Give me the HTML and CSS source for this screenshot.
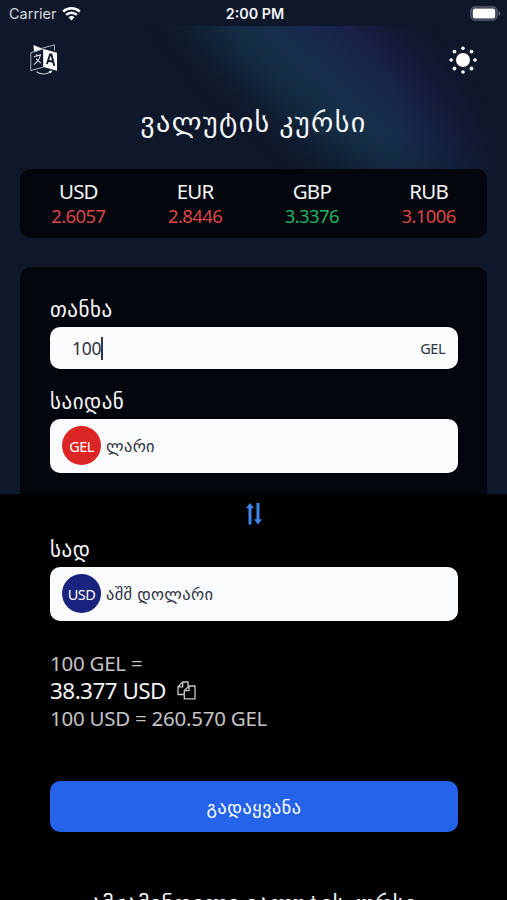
FILE: index.html
```html
<!DOCTYPE html>
<html lang="ka">
<head>
  <meta charset="UTF-8">
  <meta name="viewport" content="width=device-width, initial-scale=1.0">
  <title>ვალუტის კურსი</title>
  <link rel="stylesheet" href="styles.css">
</head>
<body>
  <div class="screen">
    <div class="status-bar">
      <div class="carrier">
        <span>Carrier</span>
        <svg width="19" height="15" viewBox="0 0 19 15" fill="none" stroke="#fff" stroke-width="2.5">
          <path d="M1.2 5.6a12 12 0 0 1 16.6 0"/>
          <path d="M4.2 8.9a7.6 7.6 0 0 1 10.6 0"/>
          <path d="M9.5 14.4l-3-3.1a4.4 4.4 0 0 1 6 0z" fill="#fff" stroke="none"/>
        </svg>
      </div>
      <span class="time">2:00 PM</span>
      <svg class="battery" width="31" height="15" viewBox="0 0 31 15">
        <rect x="1" y="1" width="26" height="13" rx="4" fill="none" stroke="#5b6070" stroke-width="1.4"/>
        <rect x="2.7" y="2.6" width="22.6" height="9.8" rx="2" fill="#fff"/>
        <path d="M28.5 5.2q2 .6 2 2.3t-2 2.3z" fill="#5b6070"/>
      </svg>
    </div>

    <header class="header">
      <div class="glow"></div>
      <div class="toolbar">
        <svg width="28" height="32" viewBox="0 0 28 32">
          <path d="M3.5 1l9.5 4-9 3z" fill="#fff"/>
          <path d="M11 4.5L24.5.8v5.8" fill="none" stroke="#aab0bd" stroke-width="1"/>
          <path d="M.8 8.8L13.5 5v18L.8 26.6z" fill="none" stroke="#aab0bd" stroke-width="1"/>
          <path d="M13.5 5L27 8.8v18L13.5 23z" fill="#fff"/>
          <path d="M17 20l3-9.5h1.4l2.9 11.3M18 16.8l5.2 1" fill="none" stroke="#0f172a" stroke-width="1.9"/>
          <path d="M3.8 12.8l6.6-1.9q-1.5 6.3-6.6 9.7M6.2 10.3l1 1.7M6.1 14.6l4.7 4.6" fill="none" stroke="#d5d9e1" stroke-width="1.1"/>
          <path d="M6.5 27.8q6.5 4.5 14.5 0" fill="none" stroke="#c4c9d3" stroke-width="1.1"/>
          <path d="M18.7 27l3.8-.6-1.8 3.2z" fill="#fff"/>
        </svg>
        <svg width="28" height="28" viewBox="0 0 28 28" fill="#fff">
          <circle cx="14" cy="14" r="7"/>
          <circle cx="14" cy="2.2" r="1.8"/>
          <circle cx="22.5" cy="5.6" r="1.9"/>
          <circle cx="26" cy="14" r="1.8"/>
          <circle cx="22.5" cy="22.5" r="1.9"/>
          <circle cx="14" cy="26" r="1.8"/>
          <circle cx="5.5" cy="22.5" r="1.9"/>
          <circle cx="2.1" cy="14" r="1.8"/>
          <circle cx="5.5" cy="5.6" r="1.9"/>
        </svg>
      </div>
      <h1>ვალუტის კურსი</h1>
    </header>

    <div class="rates">
      <div class="rate"><span>USD</span><span class="down">2.6057</span></div>
      <div class="rate"><span>EUR</span><span class="down">2.8446</span></div>
      <div class="rate"><span>GBP</span><span class="up">3.3376</span></div>
      <div class="rate"><span>RUB</span><span class="down">3.1006</span></div>
    </div>

    <main class="converter">
      <label class="label">თანხა</label>
      <div class="field amount">
        <span class="value">100</span>
        <span class="unit">GEL</span>
      </div>
      <label class="label">საიდან</label>
      <div class="field select">
        <span class="badge gel">GEL</span>
        <span class="name">ლარი</span>
      </div>
      <div class="swap">
        <svg width="18" height="24" viewBox="0 0 18 24" fill="#4285e8">
          <path d="M5 1l4 5.2H6.5v16.3H3.5V6.2H1z"/>
          <path d="M13 22.5l-4-5.2h2.5V1h3v16.3H17z"/>
        </svg>
      </div>
      <label class="label">სად</label>
      <div class="field select">
        <span class="badge usd">USD</span>
        <span class="name">აშშ დოლარი</span>
      </div>
      <div class="result">
        <p>100 GEL =</p>
        <p class="total">
          <span>38.377 USD</span>
          <svg width="19" height="19" viewBox="0 0 19 19" fill="none" stroke="#c8c8c8" stroke-width="1.3">
            <path d="M7 13.5H1V5.8L5.7 1H11v4M5.7 1v4.8H1"/>
            <path d="M7.3 9.7L12 5h6v12.8H7.3zM12 5v4.7H7.3"/>
          </svg>
        </p>
        <p>100 USD = 260.570 GEL</p>
      </div>
      <button class="submit" type="button">გადაყვანა</button>
    </main>

    <h2>ამჟამინდელი ვალუტის კურსი</h2>
  </div>
</body>
</html>
```

FILE: styles.css
```css
* { box-sizing: border-box; }
body { margin: 0; background: #000; color: #f5f6f8; font-family: "Noto Sans", "DejaVu Sans", sans-serif; }
h1, h2, p { margin: 0; font-weight: 400; }
svg { display: block; }
.screen { height: 900px; overflow: hidden; background: linear-gradient(#0f172a, #0f172a) 0 0 / 100% 494px no-repeat #000; }

.status-bar { display: grid; grid-template-columns: 1fr auto 1fr; align-items: center; height: 26px; padding: 1px 6px 0 9px; font-family: Inter, sans-serif; font-size: 14.5px; }
.carrier { display: flex; align-items: center; gap: 5px; color: #d5d8df; }
.time { font-size: 14.3px; font-weight: 600; }
.battery { justify-self: end; }

.header { position: relative; height: 143px; overflow: hidden; }
.glow { position: absolute; left: 85px; top: -75px; width: 460px; height: 230px; transform: rotate(42deg); background: linear-gradient(to top, transparent 12%, #173951 42%, #1c2d59 60%, #1e1d49 80%, transparent 98%); filter: blur(16px); opacity: 0.82; -webkit-mask-image: radial-gradient(closest-side, #000 45%, transparent); mask-image: radial-gradient(closest-side, #000 45%, transparent); }
.toolbar { position: relative; display: flex; justify-content: space-between; align-items: center; height: 32px; margin: 18px 30px 0; }
h1 { position: relative; margin-top: 27px; font-size: 28px; line-height: 36px; letter-spacing: 1.4px; text-align: center; }

.rates { display: grid; grid-template-columns: repeat(4, 1fr); height: 69px; margin: 0 20px; padding: 10px 0; border-radius: 10px; background: #03060d; text-align: center; }
.rate { display: flex; flex-direction: column; font-size: 20.5px; line-height: 25px; letter-spacing: -0.8px; }
.down, .up { font-size: 18.5px; line-height: 24px; letter-spacing: -0.6px; }
.down { color: #dc4646; }
.up { color: #22b45e; }

.converter { display: flex; flex-direction: column; height: 589px; margin: 29px 20px 0; padding: 30px 29px 0 30px; border-radius: 10px 10px 0 0; background: linear-gradient(#03060d 227px, #000 227px); }
.label { height: 30px; line-height: 24px; font-size: 21px; letter-spacing: 0.5px; white-space: nowrap; }
.field { display: flex; align-items: center; flex: none; border-radius: 10px; background: #fafbfd; color: #303443; }
.amount { justify-content: space-between; height: 42px; margin-bottom: 20px; padding: 0 13px 0 22px; }
.value { border-right: 2px solid #303443; font-size: 17.5px; line-height: 23px; letter-spacing: -0.3px; }
.unit { font-size: 14.5px; letter-spacing: -0.5px; }
.select { height: 54px; gap: 5px; padding: 0 12px 1px; font-size: 16.5px; letter-spacing: 0.35px; }
.badge { display: flex; align-items: center; justify-content: center; width: 39px; height: 39px; border-radius: 50%; color: #fff; font-size: 14.5px; letter-spacing: -0.5px; }
.gel { background: #dc2626; }
.usd { background: #1a237e; }
.swap { display: flex; justify-content: center; height: 64px; padding-top: 29px; }
.result { margin-top: 28px; color: #c4c4c4; font-size: 20.5px; line-height: 28px; letter-spacing: -0.25px; white-space: nowrap; }
.total { display: flex; align-items: center; gap: 11px; height: 27px; color: #f5f5f5; font-size: 22.5px; letter-spacing: -0.55px; }
.submit { height: 51px; margin-top: 49px; border: 0; border-radius: 10px; background: #2563eb; color: #fff; font-family: inherit; font-size: 18px; font-weight: 500; letter-spacing: 0.6px; }

h2 { margin-top: 30px; font-size: 22.5px; line-height: 34px; letter-spacing: 0.25px; text-align: center; white-space: nowrap; }
```
